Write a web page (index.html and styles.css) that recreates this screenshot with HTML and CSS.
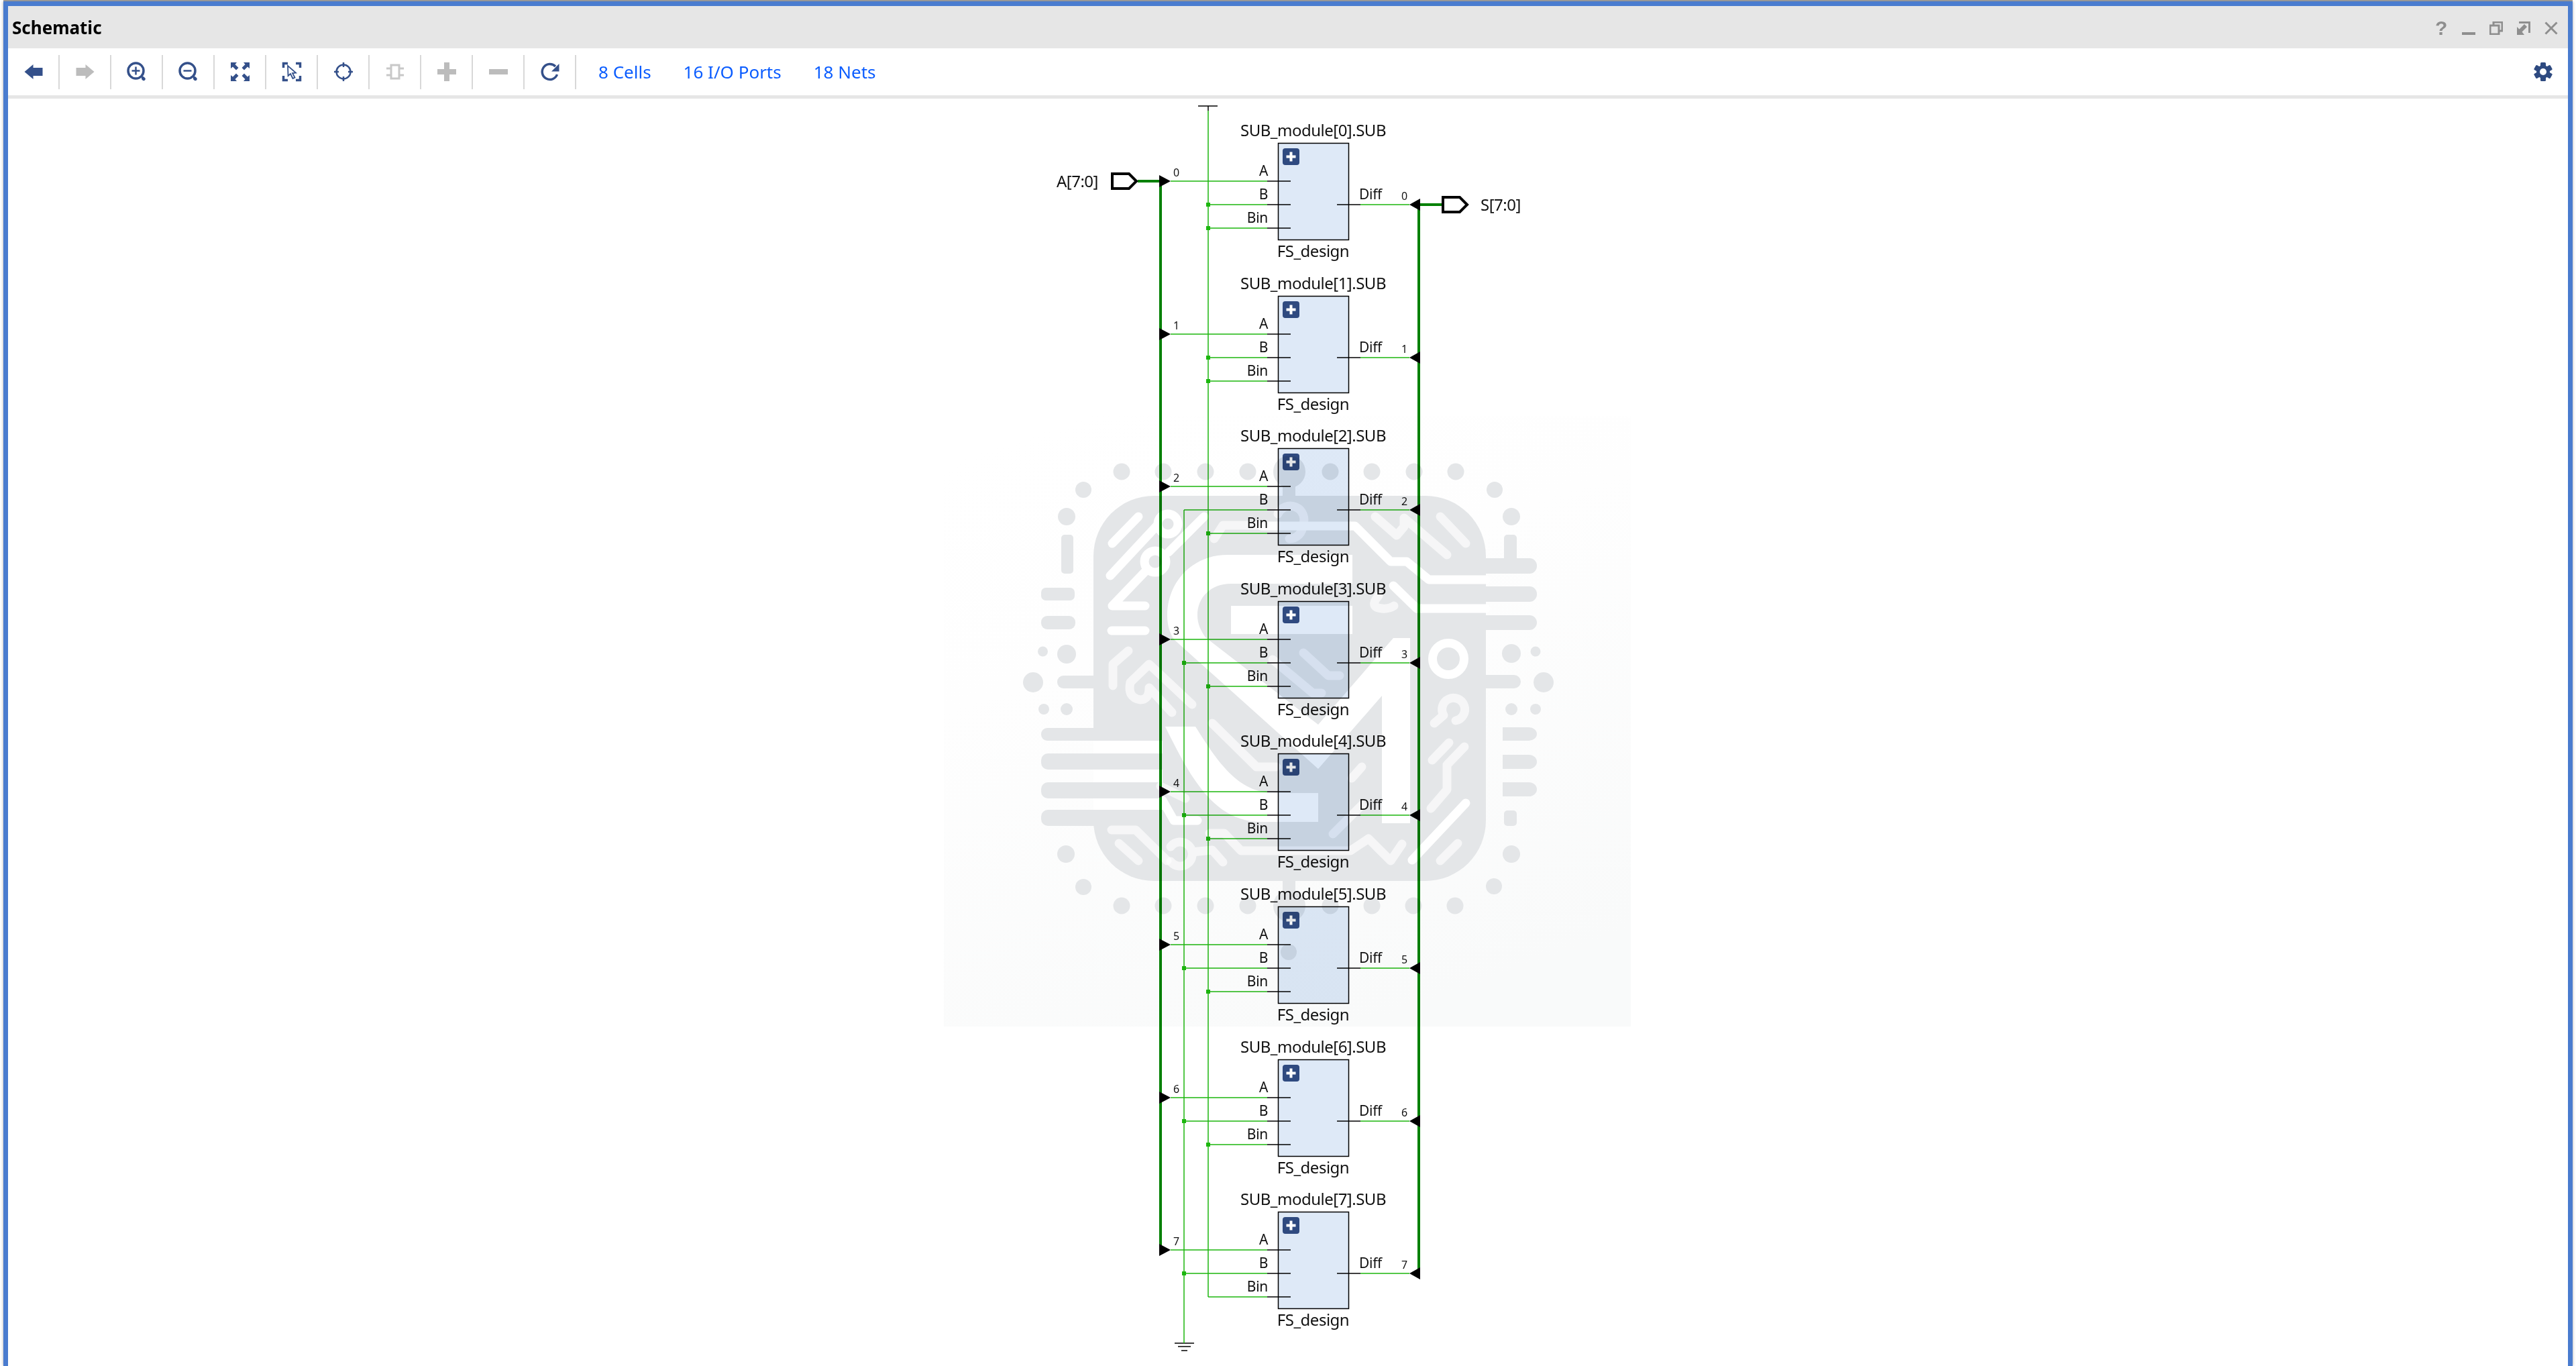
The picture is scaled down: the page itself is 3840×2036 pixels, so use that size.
FILE: index.html
```html
<!DOCTYPE html>
<html lang="en">
<head>
    <meta charset="UTF-8">
    <title>Schematic</title>
    <link rel="stylesheet" href="styles.css">
</head>
<body>
<div class="window">
    <div class="titlebar">
        <span class="title">Schematic</span>
        <div class="window-btns">
            <span class="help">?</span>
            <svg width="20" height="20" viewBox="0 0 20 20"><rect y="16" width="20" height="4"/></svg>
            <svg width="20" height="20" viewBox="0 0 20 20" class="outline"><path d="M6 5V1H19V14H14"/><rect x="1" y="6" width="13" height="13"/></svg>
            <svg width="20" height="20" viewBox="0 0 20 20" class="outline"><path d="M3 1.500H18.500V17"/><path class="solid" d="M0 20V8L3.500 11.500 11 4 15 8 7.500 15.500 11 20Z"/></svg>
            <svg width="20" height="20" viewBox="0 0 20 20" class="outline"><path d="M1.500 1.500 18.500 18.500M18.500 1.500 1.500 18.500"/></svg>
        </div>
    </div>

    <div class="toolbar">
        <div class="tool"><svg class="ico" viewBox="0 0 32 32"><path d="M2.500 16 15.500 5v5h14v12h-14v5z"/></svg></div>
        <div class="tool"><svg class="ico off" viewBox="0 0 32 32"><path d="M29.500 16 16.500 5v5h-14v12h14v5z"/></svg></div>
        <div class="tool"><svg class="ico" viewBox="0 0 32 32"><circle class="ln" cx="14.500" cy="14.500" r="11.500"/><path class="thin" d="M8.500 14.500h12M14.500 8.500v12"/><path d="M23 22l3.500 1.500 2 2a2.600 2.600 0 0 1-3.500 3.500l-2-2z"/></svg></div>
        <div class="tool"><svg class="ico" viewBox="0 0 32 32"><circle class="ln" cx="14.500" cy="14.500" r="11.500"/><path class="thin" d="M8.500 14.500h12"/><path d="M23 22l3.500 1.500 2 2a2.600 2.600 0 0 1-3.500 3.500l-2-2z"/></svg></div>
        <div class="tool"><svg class="ico" viewBox="0 0 32 32"><path d="M2 2h9L8.500 5l5 5-3.500 3.500-5-5L2 11zM30 2v9l-3-2.500-5 5L18.500 10l5-5L21 2zM2 30v-9l3 2.500 5-5 3.500 3.500-5 5 2.500 3zM30 30h-9l2.500-3-5-5 3.500-3.500 5 5 3-2.500z"/></svg></div>
        <div class="tool"><svg class="ico" viewBox="0 0 32 32"><path class="ln" d="M3.500 10V3.500H10M22 3.500h6.500V10M28.500 22v6.500H22M10 28.500H3.500V22"/><path class="cursor" d="M10 7 10.500 22 14 19 17.500 26 20.500 24.500 17 18 22 17.500z"/></svg></div>
        <div class="tool"><svg class="ico" viewBox="0 0 32 32"><circle class="thin" cx="16" cy="16" r="10.500"/><path class="thin" d="M16 2v7M16 23v7M2 16h7M23 16h7"/></svg></div>
        <div class="tool"><svg class="ico off" viewBox="0 0 32 32"><rect class="ln" x="10" y="6" width="12" height="20"/><path class="ln" d="M3 11h7M22 11h7M3 21h7M22 21h7"/></svg></div>
        <div class="tool"><svg class="ico off" viewBox="0 0 32 32"><path d="M12 2h8v10h10v8H20v10h-8V20H2v-8h10z"/></svg></div>
        <div class="tool"><svg class="ico off" viewBox="0 0 32 32"><rect x="2" y="12" width="28" height="8"/></svg></div>
        <div class="tool"><svg class="ico" viewBox="0 0 32 32"><path class="ln" d="M24 8A11.500 11.500 0 1 0 26.500 20"/><path d="M29.500 4v11.500H18z"/></svg></div>

        <div class="stats">
            <a>8 Cells</a>
            <a>16 I/O Ports</a>
            <a>18 Nets</a>
        </div>

        <svg class="gear" width="28" height="28" viewBox="0 0 28 28">
            <rect x="10" y="0" width="8" height="28" rx="1.500"/>
            <rect x="10" y="0" width="8" height="28" rx="1.500" transform="rotate(60 14 14)"/>
            <rect x="10" y="0" width="8" height="28" rx="1.500" transform="rotate(120 14 14)"/>
            <circle cx="14" cy="14" r="10"/>
            <circle class="hole" cx="14" cy="14" r="5"/>
        </svg>
    </div>

    <div class="canvas">
        <!-- viewBox keeps the diagram in page coordinates -->
        <svg class="schematic" width="3816" height="1889" viewBox="12 147 3816 1889">
            <defs>
                <linearGradient id="wmFade" x1="0.2" y1="0" x2="0.6" y2="1">
                    <stop offset="0" stop-color="#ffffff"/>
                    <stop offset="0.35" stop-color="#fefefe"/>
                    <stop offset="1" stop-color="#f9fafa"/>
                </linearGradient>

                <!-- one FS_design cell, y is relative to the top of the box -->
                <g id="cell">
                    <path class="net" d="M1745 57H1889M2028 92H2101"/>
                    <rect class="box" x="1905.500" y="0.500" width="105" height="144"/>
                    <rect class="expand" x="1912" y="8" width="25" height="25" rx="4"/>
                    <path class="expand-plus" d="M1917.500 20.500h14M1924.500 13.500v14"/>
                    <path class="pin" d="M1889 57h35M1889 92h35M1889 127h35M1993 92h35"/>
                    <polygon class="arrow" points="1728,48 1745,57 1728,66"/>
                    <polygon class="arrow" points="2117,83 2101,92 2117,101"/>
                    <text class="pin-name end" x="1890" y="49">A</text>
                    <text class="pin-name end" x="1890" y="84">B</text>
                    <text class="pin-name end" x="1890" y="119">Bin</text>
                    <text class="pin-name" x="2026" y="84">Diff</text>
                    <text class="cell-name mid" x="1957.500" y="170">FS_design</text>
                </g>
                <rect id="dotA" class="dot" x="1762" y="89" width="6" height="6"/>
                <rect id="dotB" class="dot" x="1798" y="89" width="6" height="6"/>
                <rect id="dotC" class="dot" x="1798" y="124" width="6" height="6"/>
            </defs>

            <!-- const nets -->
            <path class="pin" d="M1786 158H1815M1801 158V165M1751 2002H1780M1756 2007H1775M1761 2013H1770"/>
            <path class="net" d="M1801 165V1933M1765 760V2002"/>

            <!-- buses and ports -->
            <path class="bus" d="M1696 270H1730V1862M2149 305H2115V1897"/>
            <polygon class="port" points="1658,259 1683,259 1694,270 1683,281 1658,281"/>
            <polygon class="port" points="2151,294 2176,294 2187,305 2176,316 2151,316"/>
            <text class="port-name end" x="1637" y="279">A[7:0]</text>
            <text class="port-name" x="2207" y="314">S[7:0]</text>

            <g transform="translate(0 213)">
                <path class="net" d="M1801 92H1889M1801 127H1889"/>
                <use href="#cell"/><use href="#dotB"/><use href="#dotC"/>
                <text class="cell-name mid" x="1957.500" y="-10">SUB_module[0].SUB</text>
                <text class="bit" x="1749" y="50">0</text><text class="bit" x="2089" y="85">0</text>
            </g>
            <g transform="translate(0 441)">
                <path class="net" d="M1801 92H1889M1801 127H1889"/>
                <use href="#cell"/><use href="#dotB"/><use href="#dotC"/>
                <text class="cell-name mid" x="1957.500" y="-10">SUB_module[1].SUB</text>
                <text class="bit" x="1749" y="50">1</text><text class="bit" x="2089" y="85">1</text>
            </g>
            <g transform="translate(0 668)">
                <path class="net" d="M1765 92H1889M1801 127H1889"/>
                <use href="#cell"/><use href="#dotC"/>
                <text class="cell-name mid" x="1957.500" y="-10">SUB_module[2].SUB</text>
                <text class="bit" x="1749" y="50">2</text><text class="bit" x="2089" y="85">2</text>
            </g>
            <g transform="translate(0 896)">
                <path class="net" d="M1765 92H1889M1801 127H1889"/>
                <use href="#cell"/><use href="#dotA"/><use href="#dotC"/>
                <text class="cell-name mid" x="1957.500" y="-10">SUB_module[3].SUB</text>
                <text class="bit" x="1749" y="50">3</text><text class="bit" x="2089" y="85">3</text>
            </g>
            <g transform="translate(0 1123)">
                <path class="net" d="M1765 92H1889M1801 127H1889"/>
                <use href="#cell"/><use href="#dotA"/><use href="#dotC"/>
                <text class="cell-name mid" x="1957.500" y="-10">SUB_module[4].SUB</text>
                <text class="bit" x="1749" y="50">4</text><text class="bit" x="2089" y="85">4</text>
            </g>
            <g transform="translate(0 1351)">
                <path class="net" d="M1765 92H1889M1801 127H1889"/>
                <use href="#cell"/><use href="#dotA"/><use href="#dotC"/>
                <text class="cell-name mid" x="1957.500" y="-10">SUB_module[5].SUB</text>
                <text class="bit" x="1749" y="50">5</text><text class="bit" x="2089" y="85">5</text>
            </g>
            <g transform="translate(0 1579)">
                <path class="net" d="M1765 92H1889M1801 127H1889"/>
                <use href="#cell"/><use href="#dotA"/><use href="#dotC"/>
                <text class="cell-name mid" x="1957.500" y="-10">SUB_module[6].SUB</text>
                <text class="bit" x="1749" y="50">6</text><text class="bit" x="2089" y="85">6</text>
            </g>
            <g transform="translate(0 1806)">
                <path class="net" d="M1765 92H1889M1801 127H1889"/>
                <use href="#cell"/><use href="#dotA"/>
                <text class="cell-name mid" x="1957.500" y="-10">SUB_module[7].SUB</text>
                <text class="bit" x="1749" y="50">7</text><text class="bit" x="2089" y="85">7</text>
            </g>

            <!-- watermark lying over the diagram -->
            <g class="watermark">
                <rect x="1407" y="620" width="1024" height="910" fill="url(#wmFade)"/>

                <g class="wm-gray">
                    <rect x="1630" y="739" width="585" height="574" rx="90"/>
                    <rect x="1912" y="703" width="19" height="40"/>
                    <rect x="1912" y="1309" width="19" height="41"/>
                    <circle cx="1922" cy="703" r="24"/><circle cx="1922" cy="1350" r="24"/>

                    <circle cx="1672" cy="703" r="12.500"/><circle cx="1734" cy="703" r="12.500"/>
                    <circle cx="1797" cy="703" r="12.500"/><circle cx="1860" cy="703" r="12.500"/>
                    <circle cx="1983" cy="703" r="12.500"/><circle cx="2045" cy="703" r="12.500"/>
                    <circle cx="2108" cy="703" r="12.500"/><circle cx="2170" cy="703" r="12.500"/>
                    <circle cx="1615" cy="730" r="12"/><circle cx="2228" cy="730" r="12"/>
                    <circle cx="1590" cy="770" r="13"/><circle cx="2253" cy="770" r="13"/>

                    <circle cx="1672" cy="1350" r="12.500"/><circle cx="1734" cy="1350" r="12.500"/>
                    <circle cx="1797" cy="1350" r="12.500"/><circle cx="1860" cy="1350" r="12.500"/>
                    <circle cx="1983" cy="1350" r="12.500"/><circle cx="2045" cy="1350" r="12.500"/>
                    <circle cx="2107" cy="1350" r="12.500"/><circle cx="2169" cy="1350" r="12.500"/>
                    <circle cx="1615" cy="1322" r="12"/><circle cx="2227" cy="1321" r="12"/>
                    <circle cx="1589" cy="1273" r="13"/><circle cx="2253" cy="1273" r="13"/>
                    <circle cx="1921" cy="1419" r="12"/>

                    <circle cx="1554.500" cy="971" r="7.500"/><circle cx="1590" cy="975" r="14"/>
                    <circle cx="1540" cy="1017" r="15"/><circle cx="1556" cy="1057" r="8"/>
                    <circle cx="1590" cy="1057" r="9"/>
                    <circle cx="2289" cy="971" r="7.500"/><circle cx="2253" cy="974" r="14"/>
                    <circle cx="2301" cy="1017" r="15"/><circle cx="2289" cy="1057" r="8"/>
                    <circle cx="2253" cy="1057" r="9"/>

                    <rect x="1582" y="797" width="18" height="58" rx="5"/>
                    <rect x="1552" y="876" width="50" height="19" rx="7"/>
                    <rect x="1552" y="918" width="51" height="20" rx="9"/>
                    <rect x="1576" y="1007" width="70" height="19" rx="9"/>
                    <rect x="1552" y="1085" width="90" height="19" rx="9"/>
                    <rect x="1552" y="1123" width="90" height="24" rx="10"/>
                    <rect x="1552" y="1166" width="90" height="24" rx="10"/>
                    <rect x="1552" y="1207" width="90" height="24" rx="10"/>

                    <rect x="2242" y="797" width="19" height="50" rx="5"/>
                    <rect x="2200" y="832" width="91" height="23" rx="11"/>
                    <rect x="2200" y="874" width="91" height="23" rx="11"/>
                    <rect x="2200" y="917" width="91" height="22" rx="11"/>
                    <rect x="2200" y="1006" width="67" height="20" rx="10"/>
                    <path d="M2240 1084h39a12 10 0 0 1 0 20h-39zM2240 1125h39a12 10.500 0 0 1 0 21h-39zM2240 1166h39a12 10.500 0 0 1 0 21h-39z"/>
                    <rect x="2242" y="1208" width="19" height="23" rx="5"/>
                </g>

                <g class="wm-white">
                    <!-- M with the curve of the G -->
                    <path d="M2016 827H1830C1775 827 1740 870 1740 917C1740 935 1745 945 1750 953L1965 1146L2060 1037V1227H2102V951H2077L1965 1080L1797 950C1790 940 1785 930 1785 917C1785 890 1805 870 1835 870H2016Z"/>
                    <rect x="1835" y="903" width="181" height="42"/>
                    <path d="M1737 1083H1782C1815 1135 1845 1182 1900 1182H1965V1225H1880C1810 1225 1775 1160 1737 1083Z"/>
                    <rect x="1630" y="1104" width="103" height="19"/>
                    <rect x="1630" y="1147" width="103" height="19"/>
                    <rect x="1630" y="1190" width="103" height="17"/>
                </g>

                <g class="wm-trace">
                    <path d="M1880 784H2020L2073 837H2097L2130 864H2215"/>
                    <path d="M2077 873L2112 907H2215"/>
                    <path d="M1742 823L1795 770"/>
                    <path d="M1707 852L1658 903H1707"/>
                    <path d="M1655 858L1725 783"/>
                    <path d="M2105 1282L2185 1197"/>
                    <path d="M1733 1193L1750 1223H1785"/>
                    <path d="M1697 770L1658 810"/>
                    <path d="M1657 940H1707"/>
                    <circle cx="1741" cy="781" r="15"/>
                    <circle cx="1722" cy="837" r="16"/>
                    <circle cx="2159" cy="982" r="23.500"/>
                </g>

                <g class="wm-trace faint">
                    <path d="M1810 803L1823 783H1880"/>
                    <path d="M1682 970L1659 990V1022"/>
                    <path d="M1777 1050L1713 990L1685 1017Q1680 1040 1700 1043Q1713 1043 1713 1025L1747 1062"/>
                    <path d="M1807 1078L1873 1143H1903"/>
                    <path d="M1943 973L1980 1007H1997"/>
                    <path d="M1897 983L1957 1033H1970"/>
                    <path d="M2050 770L2082 798L2093 785V772L2157 827"/>
                    <path d="M2147 770L2185 810"/>
                    <path d="M2055 888Q2040 905 2060 907Q2070 908 2078 903"/>
                    <path d="M2160 1107L2135 1133"/>
                    <path d="M2183 1113L2157 1140V1177L2133 1205"/>
                    <path d="M2173 1257L2147 1283"/>
                    <path d="M1803 1242H1825L1850 1268H2013L2040 1250L2073 1283L2090 1258"/>
                    <path d="M2030 1143L2015 1160M1987 1243L2030 1200"/>
                    <path d="M1657 1237H1693L1740 1283M1668 1257L1697 1283"/>
                    <path d="M1745 1262A18 18 0 1 1 1745 1284M1777 1270L1807 1267L1823 1285"/>
                    <path d="M1730 1172L1767 1190"/>
                    <path d="M2152 1066A17 17 0 1 1 2170 1074M2152 1066L2138 1078"/>
                    <path d="M1905 766A20 20 0 0 1 1942 783A20 20 0 0 1 1922 803"/>
                </g>
            </g>
        </svg>
    </div>
</div>
</body>
</html>
```

FILE: styles.css
```css
html, body {
    margin: 0;
    height: 100%;
    overflow: hidden;
    background: #fff;
}

body {
    padding: 2px 5px 0;
    box-sizing: border-box;
    font-family: "Noto Sans", sans-serif;
}

.window {
    height: 100%;
    display: flex;
    flex-direction: column;
    background: #fff;
    border: 7px solid #4a7ccf;
    border-bottom: none;
    box-sizing: border-box;
    box-shadow: 0 0 4px rgba(0, 0, 0, 0.35), 0 -2px 0 #a9a9a9;
}

.titlebar {
    height: 63px;
    flex: none;
    display: flex;
    align-items: center;
    justify-content: space-between;
    background: #e6e6e6;
    padding: 0 15px 0 6px;
}

.title {
    font-size: 26px;
    font-weight: 700;
    color: #000;
}

.window-btns {
    display: flex;
    align-items: center;
    gap: 21px;
    margin-top: 3px;
}

.window-btns svg {
    fill: #8e8e8e;
    display: block;
}

.window-btns .outline path,
.window-btns .outline rect {
    fill: none;
    stroke: #8e8e8e;
    stroke-width: 3;
}

.window-btns .outline .solid {
    fill: #8e8e8e;
    stroke: none;
}

.help {
    width: 18px;
    margin-right: 1px;
    font-family: "Liberation Sans", sans-serif;
    font-size: 30px;
    font-weight: 700;
    line-height: 20px;
    color: #8e8e8e;
    text-align: center;
}

.toolbar {
    height: 70px;
    flex: none;
    display: flex;
    align-items: center;
    border-bottom: 5px solid #e6e6e6;
    box-sizing: content-box;
    padding-right: 23px;
}

.tool {
    width: 75px;
    height: 51px;
    flex: none;
    display: flex;
    align-items: center;
    justify-content: center;
    border-right: 2px solid #d8d8d8;
}

.ico {
    width: 32px;
    height: 32px;
    fill: #34508a;
}

.ico.off {
    fill: #bcbcbc;
}

.ico .ln,
.ico .thin {
    fill: none;
    stroke: #34508a;
    stroke-width: 3.5;
}

.ico .thin {
    stroke-width: 2.5;
}

.ico.off .ln {
    stroke: #c8c8c8;
    stroke-width: 3;
}

.ico .cursor {
    fill: #fff;
    stroke: #34508a;
    stroke-width: 1.8;
}

.stats {
    display: flex;
    gap: 48px;
    margin-left: 33px;
}

.stats a {
    font-size: 26px;
    color: #0a5cff;
}

.gear {
    margin-left: auto;
    fill: #2e4a80;
}

.gear .hole {
    fill: #fff;
}

.canvas {
    flex: 1;
    overflow: hidden;
}

.schematic {
    display: block;
    fill: #111;
}

.schematic text {
    font-family: "Noto Sans", sans-serif;
}

.end {
    text-anchor: end;
}

.mid {
    text-anchor: middle;
}

.cell-name {
    font-size: 24px;
    letter-spacing: -0.5px;
}

.port-name {
    font-size: 24px;
    letter-spacing: -0.5px;
}

.pin-name {
    font-size: 21px;
    letter-spacing: -0.3px;
}

.bit {
    font-size: 16px;
}

.box {
    fill: #dee9f7;
    stroke: #000;
    stroke-width: 1.5;
}

.expand {
    fill: #2f4a80;
}

.expand-plus {
    fill: none;
    stroke: #fff;
    stroke-width: 4;
}

.pin {
    fill: none;
    stroke: #000;
    stroke-width: 1.5;
}

.net {
    fill: none;
    stroke: #1cb60e;
    stroke-width: 1.5;
}

.dot {
    fill: #1cb60e;
}

.bus {
    fill: none;
    stroke: #008000;
    stroke-width: 4;
}

.port {
    fill: #fff;
    stroke: #000;
    stroke-width: 4;
}

.arrow {
    fill: #000;
}

.watermark {
    mix-blend-mode: multiply;
}

.wm-gray {
    fill: #e4e6e8;
}

.wm-white {
    fill: #fff;
}

.wm-trace {
    fill: none;
    stroke: #fff;
    stroke-width: 13;
    stroke-linecap: round;
    stroke-linejoin: round;
}

.wm-trace.faint {
    stroke-opacity: 0.65;
}
```
